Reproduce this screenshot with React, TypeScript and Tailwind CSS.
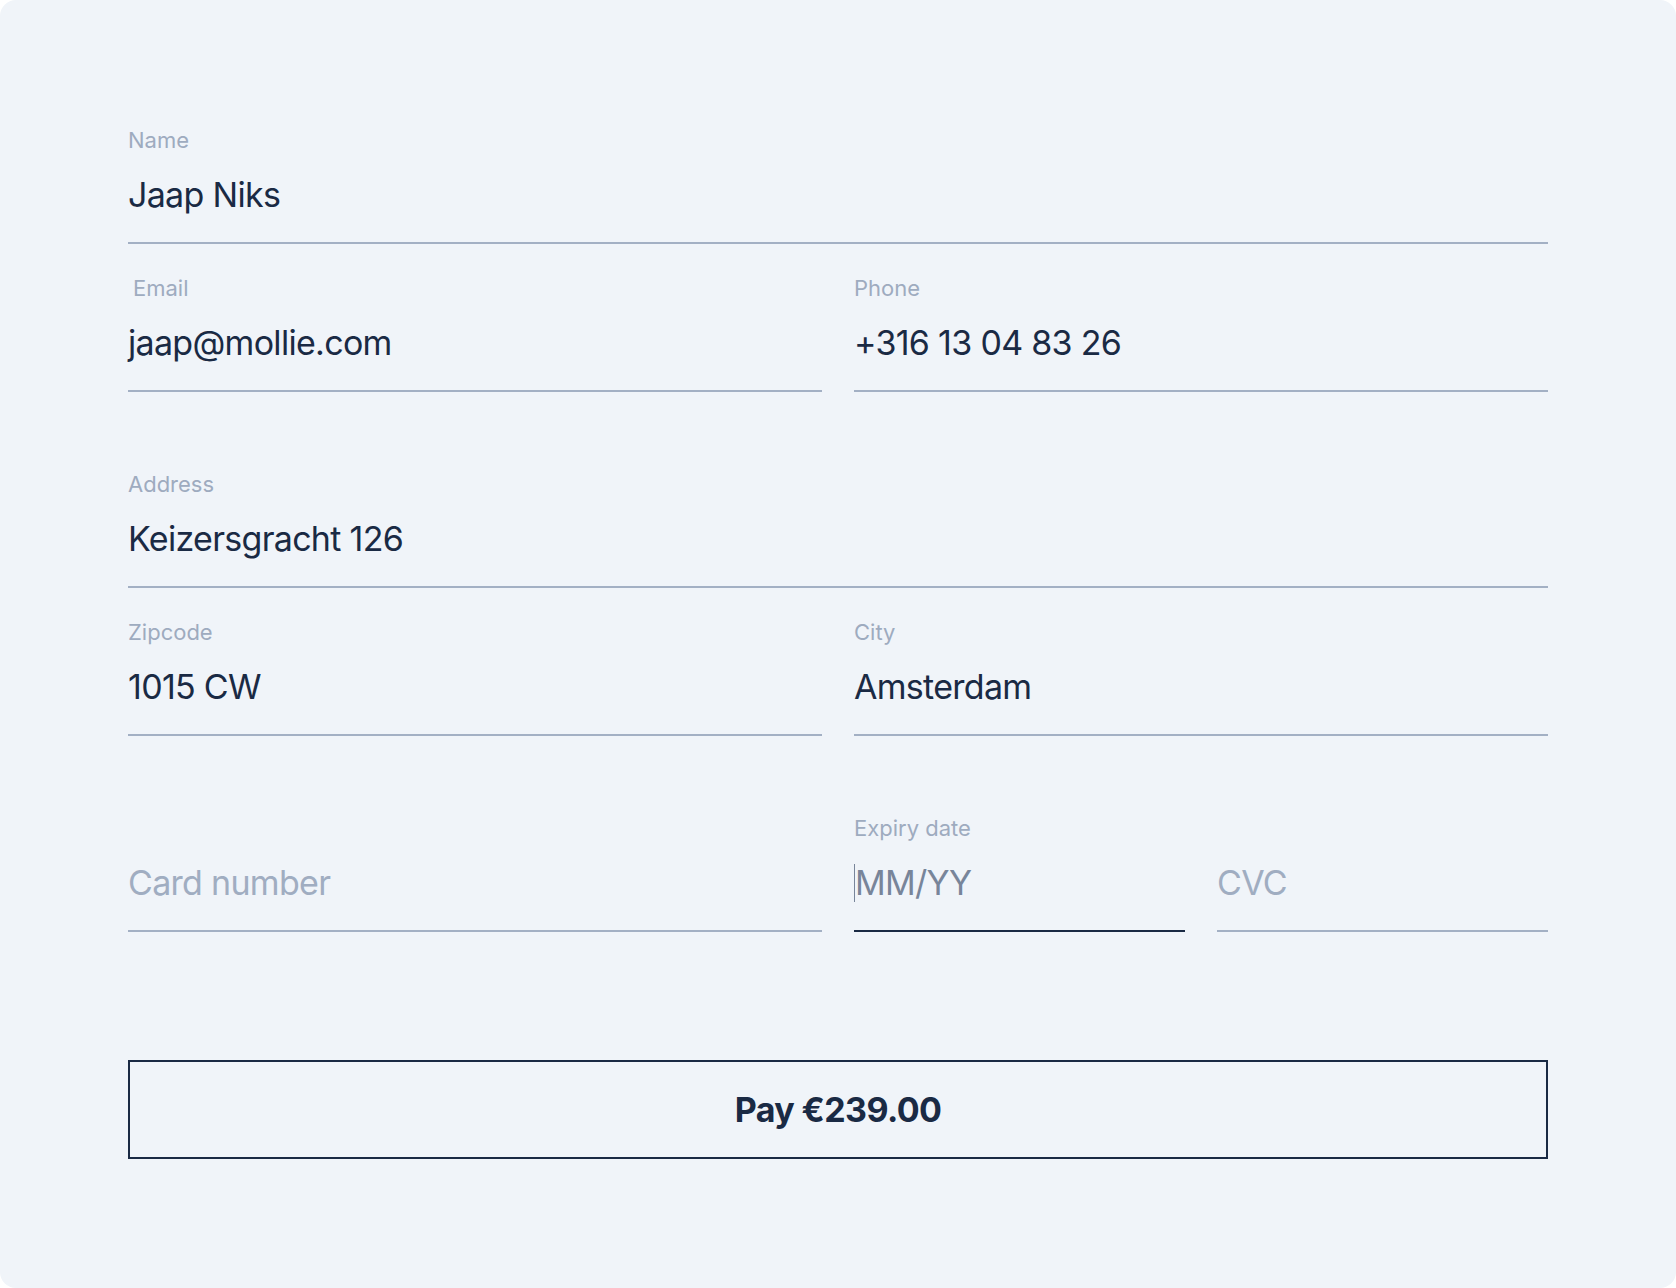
type FieldProps = {
  label?: string;
  value: string;
  labelClass?: string;
  tone?: "value" | "placeholder" | "active";
  focused?: boolean;
};

function Field({ label, value, labelClass = "", tone = "value", focused = false }: FieldProps) {
  const textColor =
    tone === "value" ? "text-[#1a2a44]" : tone === "active" ? "text-[#78859a]" : "text-[#a0adc1]";
  return (
    <div className="flex flex-col">
      <div className={`h-[28px] text-[22px] leading-[30px] text-[#9eabbf] ${labelClass}`}>{label}</div>
      <div
        className={`mt-[20px] flex items-center pb-[25px] border-b-2 ${
          focused ? "border-[#1a2a44]" : "border-[#a3b0c4]"
        }`}
      >
        {focused && <span className="w-px h-[38px] bg-[#78859a]" />}
        <span className={`text-[34px] leading-[44px] tracking-[-0.7px] ${textColor}`}>{value}</span>
      </div>
    </div>
  );
}

export default function App() {
  return (
    <div className="bg-white min-h-screen" style={{ fontFamily: "Inter, 'Noto Sans', sans-serif" }}>
      <div className="bg-[#f0f4f9] rounded-2xl h-[1288px] px-[128px] pt-[125px]">
        <Field label="Name" value="Jaap Niks" />

        <div className="mt-[29px] grid grid-cols-2 gap-x-8">
          <Field label="Email" labelClass="pl-[5px]" value="jaap@mollie.com" />
          <Field label="Phone" value="+316 13 04 83 26" />
        </div>

        <div className="mt-[77px]">
          <Field label="Address" value="Keizersgracht 126" />
        </div>

        <div className="mt-[29px] grid grid-cols-2 gap-x-8">
          <Field label="Zipcode" value="1015 CW" />
          <Field label="City" value="Amsterdam" />
        </div>

        <div className="mt-[77px] grid grid-cols-2 gap-x-8">
          <Field value="Card number" tone="placeholder" />
          <div className="grid grid-cols-2 gap-x-8">
            <Field label="Expiry date" value="MM/YY" tone="active" focused />
            <Field value="CVC" tone="placeholder" />
          </div>
        </div>

        <button className="mt-[128px] w-full h-[99px] border-2 border-[#1a2a44] flex items-center justify-center text-[34px] font-bold text-[#1a2a44] tracking-[-0.6px]">
          Pay €239.00
        </button>
      </div>
    </div>
  );
}
